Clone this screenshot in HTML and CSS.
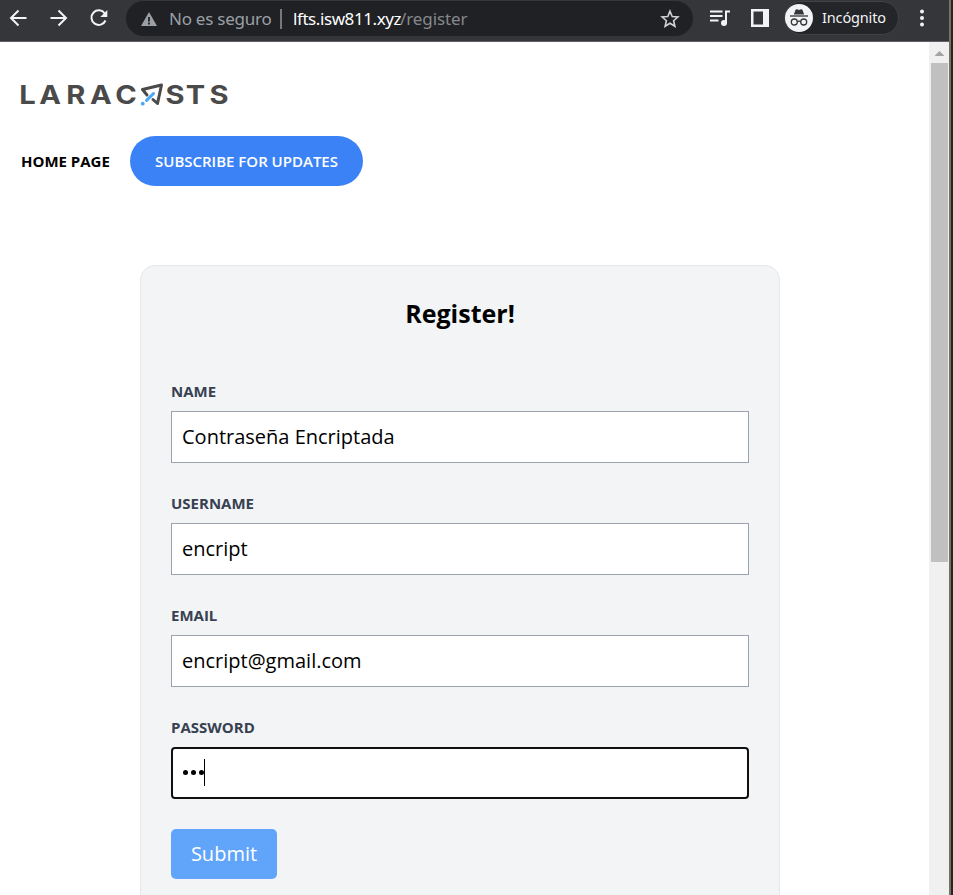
FILE: index.html
```html
<!DOCTYPE html>
<html lang="es">
<head>
<meta charset="utf-8">
<title>Register</title>
<link rel="stylesheet" href="styles.css">
</head>
<body>
<div class="window">
  <div class="toolbar">
    <svg class="nav-icons" width="126" height="41" viewBox="0 0 126 41" fill="none" stroke="#f1f3f4" stroke-width="2">
      <path d="M26.500 18H11.500M18.500 10.500L11 18l7.500 7.500"/>
      <path d="M50.500 18H65.500M58.500 10.500L66 18l-7.500 7.500"/>
      <path d="M104.800 13.500A7.300 7.300 0 1 0 105.500 20.500"/>
      <path d="M107.300 10v7h-7z" fill="#f1f3f4" stroke="none"/>
    </svg>
    <div class="address">
      <svg class="warn" width="16" height="14" viewBox="0 0 16 14"><path d="M8 0L16 14H0z" fill="#9aa0a6"/><path d="M8 5v4.500M8 10.500v2" stroke="#202124" stroke-width="1.800"/></svg>
      <span class="insecure">No es seguro</span>
      <span class="divider"></span>
      <span class="host">lfts.isw811.xyz</span><span class="path">/register</span>
      <svg class="star" width="20" height="20" viewBox="0 0 20 20"><path d="M10 2.200l2.200 5.300 5.700.5-4.300 3.700 1.300 5.600-4.900-3-4.900 3 1.300-5.600L2.100 8l5.700-.5z" fill="none" stroke="#d0d2d5" stroke-width="1.600"/></svg>
    </div>
    <svg class="media" width="20" height="18" viewBox="0 0 20 18"><path d="M0 2.500h12.500M0 7h12.500M0 11.500h8.500" stroke="#f1f3f4" stroke-width="2"/><path d="M16 14V2.500h4" fill="none" stroke="#f1f3f4" stroke-width="2"/><circle cx="14" cy="14" r="3" fill="#f1f3f4"/></svg>
    <svg class="panel" width="18" height="18" viewBox="0 0 18 18"><path d="M0 0h18v18H0zM2.500 2.500v13H12v-13z" fill="#f1f3f4" fill-rule="evenodd"/></svg>
    <div class="profile">
      <svg width="28" height="28" viewBox="0 0 28 28"><circle cx="14" cy="14" r="14" fill="#f1f3f4"/><path d="M8.800 10.500L10.500 6q.5-1 1.500-.7l2 .6 2-.6q1-.3 1.500.7l1.700 4.500z" fill="#35363a"/><path d="M5 12h18" stroke="#55575b" stroke-width="1.600"/><g fill="none" stroke="#35363a" stroke-width="1.300"><circle cx="9.300" cy="18" r="3"/><circle cx="18.700" cy="18" r="3"/><path d="M12.300 17.700q1.700-1.200 3.400 0"/></g></svg>
      <span>Incógnito</span>
    </div>
    <svg class="dots" width="4" height="18" viewBox="0 0 4 18" fill="#f1f3f4"><circle cx="2" cy="2.500" r="2"/><circle cx="2" cy="9" r="2"/><circle cx="2" cy="15.500" r="2"/></svg>
  </div>
  <div class="viewport">
    <main class="page">
      <header>
        <svg class="logo" width="210" height="24" viewBox="0 0 210 24">
          <g transform="scale(1.14 1)">
            <text y="21" x="-0.700 16.800 40.600 61.500 83.600">LARAC</text>
            <text y="21" x="127.700 145.400 166.200">STS</text>
          </g>
          <g fill="none" stroke-linejoin="round" stroke-linecap="round">
            <path d="M127 12L122.500 6.500 141.500 2 137.500 20.500 133 16.500" stroke="#4a4a4a" stroke-width="3"/>
            <path d="M133.500 10.500L126.500 17.500" stroke="#4ba6f6" stroke-width="3"/><path d="M122.700 20.700h.1" stroke="#4ba6f6" stroke-width="3.700"/>
          </g>
        </svg>
        <nav>
          <a class="home">Home Page</a>
          <a class="subscribe">Subscribe for Updates</a>
        </nav>
      </header>
      <section class="card">
        <h1>Register!</h1>
        <form>
          <label>Name</label>
          <div class="field">Contraseña Encriptada</div>
          <label>Username</label>
          <div class="field">encript</div>
          <label>Email</label>
          <div class="field">encript@gmail.com</div>
          <label>Password</label>
          <div class="field focused"><span class="bullets"><i></i><i></i><i></i></span><span class="caret"></span></div>
          <button type="button">Submit</button>
        </form>
      </section>
    </main>
    <div class="scrollbar"><div class="arrow"></div><div class="thumb"></div></div>
  </div>
</div>
</body>
</html>
```
FILE: styles.css
```css
* { box-sizing: border-box; }
body { margin: 0; height: 895px; overflow: hidden; background: #242527; font-family: "Open Sans", sans-serif; color: #000; }
.window { width: 951px; height: 895px; border-right: 2px solid #77705a; display: flex; flex-direction: column; overflow: hidden; }
svg { display: block; flex: none; }
.toolbar { height: 42px; flex: none; display: flex; align-items: flex-start; background: #35363a; border-bottom: 1px solid #5f6164; }
.address { width: 567px; height: 35px; margin-top: 1px; padding: 0 13px 0 15px; border-radius: 18px; background: #202124; display: flex; align-items: center; font: 17px/35px "Noto Sans", sans-serif; color: #9aa0a6; white-space: nowrap; }
.warn { margin-right: 12px; }
.insecure { width: 111px; letter-spacing: -.25px; }
.divider { width: 2px; height: 20px; margin-right: 11px; background: #75787c; }
.host { color: #fff; letter-spacing: -.42px; width: 107px; }
.path { color: #85888c; letter-spacing: -.1px; }
.star { margin-left: auto; }
.media { margin: 9px 0 0 17px; }
.panel { margin: 9px 0 0 21px; }
.profile { width: 115px; height: 34px; margin: 1px 0 0 15px; padding-left: 1px; border: 1px solid #414246; border-radius: 17px; background: #242528; display: flex; align-items: center; gap: 9px; color: #f1f3f4; font: 14.500px/30px "Noto Sans", sans-serif; letter-spacing: -.15px; }
.profile svg { margin-left: -1px; }
.profile span { padding-bottom: 2px; }
.dots { margin: 9px 0 0 21px; }
.viewport { flex: 1; display: flex; min-height: 0; background: #fff; }
.page { width: 929px; overflow: hidden; }
header { padding: 41px 20px 0; }
.logo { overflow: visible; }
.logo text { font: 700 25.500px Inter, sans-serif; fill: #4a4a4a; }
nav { display: flex; align-items: center; height: 50px; margin-top: 29px; font-size: 15px; line-height: 20px; text-transform: uppercase; }
.home { width: 110px; padding-left: 1px; font-weight: 700; white-space: nowrap; }
.subscribe { width: 233px; height: 50px; border-radius: 25px; background: #3b82f6; color: #fff; font-weight: 600; line-height: 50px; text-align: center; }
.card { width: 640px; height: 700px; margin: 79px 0 0 140px; padding: 30px; border: 1px solid #e5e7eb; border-radius: 15px; background: #f3f4f6; }
h1 { margin: 0; font-size: 25px; line-height: 35px; text-align: center; }
form { margin-top: 50px; }
label { display: block; margin-bottom: 10px; font-size: 15px; line-height: 20px; font-weight: 700; color: #374151; text-transform: uppercase; }
.field { height: 52px; margin-bottom: 30px; padding: 0 10px; border: 1px solid #9ca3af; background: #fff; font-size: 20px; line-height: 50px; }
.focused { border: 2px solid #101010; border-radius: 4px; display: flex; align-items: center; }
.bullets { display: flex; gap: 3px; margin-right: -1px; padding-bottom: 1px; }
.bullets i { width: 5px; height: 5px; border-radius: 50%; background: #000; }
.caret { width: 1px; height: 27px; margin: 0 0 2px 1px; background: #000; }
button { display: block; width: 106px; height: 50px; padding: 0; border: 0; border-radius: 5px; background: #60a5fa; color: #fff; font: 20px/50px "Open Sans", sans-serif; }
.scrollbar { width: 20px; padding: 9px 1px 0 2px; background: #f0f0f0; }
.arrow { width: 10px; height: 5px; margin: 0 auto 7px; background: #a3a3a3; clip-path: polygon(50% 0, 100% 100%, 0 100%); }
.thumb { height: 499px; background: #c0c0c0; }
```
